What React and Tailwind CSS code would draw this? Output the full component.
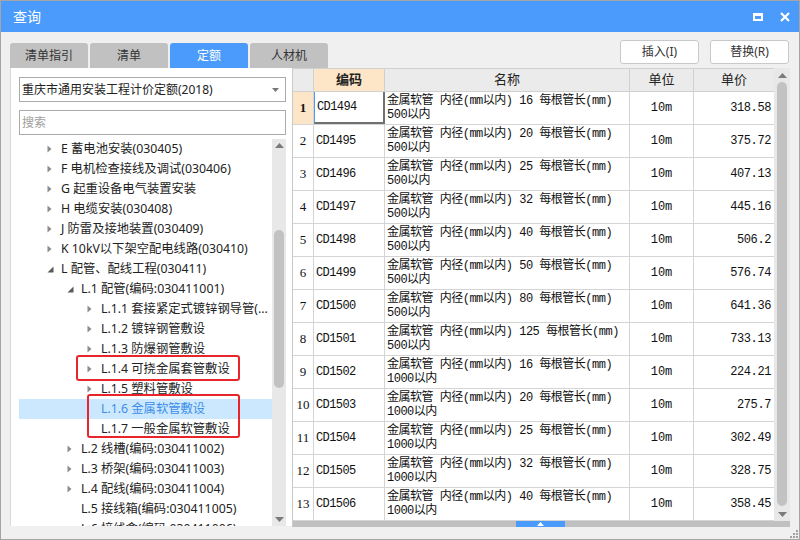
import React from "react";

const ui = { fontFamily: '"Noto Sans", "Noto Sans CJK SC", sans-serif' };
const mono = { fontFamily: '"Liberation Mono", "Noto Sans CJK SC", monospace' };

const tabs = ["清单指引", "清单", "定额", "人材机"];

const tree = [
  { lv: 1, a: "c", t: "E 蓄电池安装(030405)" },
  { lv: 1, a: "c", t: "F 电机检查接线及调试(030406)" },
  { lv: 1, a: "c", t: "G 起重设备电气装置安装" },
  { lv: 1, a: "c", t: "H 电缆安装(030408)" },
  { lv: 1, a: "c", t: "J 防雷及接地装置(030409)" },
  { lv: 1, a: "c", t: "K 10kV以下架空配电线路(030410)" },
  { lv: 1, a: "e", t: "L 配管、配线工程(030411)" },
  { lv: 2, a: "e", t: "L.1 配管(编码:030411001)" },
  { lv: 3, a: "c", t: "L.1.1 套接紧定式镀锌钢导管(..." },
  { lv: 3, a: "c", t: "L.1.2 镀锌钢管敷设" },
  { lv: 3, a: "c", t: "L.1.3 防爆钢管敷设" },
  { lv: 3, a: "c", t: "L.1.4 可挠金属套管敷设" },
  { lv: 3, a: "c", t: "L.1.5 塑料管敷设" },
  { lv: 3, a: null, t: "L.1.6 金属软管敷设", sel: true },
  { lv: 3, a: null, t: "L.1.7 一般金属软管敷设" },
  { lv: 2, a: "c", t: "L.2 线槽(编码:030411002)" },
  { lv: 2, a: "c", t: "L.3 桥架(编码:030411003)" },
  { lv: 2, a: "c", t: "L.4 配线(编码:030411004)" },
  { lv: 2, a: null, t: "L.5 接线箱(编码:030411005)" },
  { lv: 2, a: null, t: "L.6 接线盒(编码:030411006)" },
];

const rows = [
  ["CD1494", "16", "500以内", "318.58"],
  ["CD1495", "20", "500以内", "375.72"],
  ["CD1496", "25", "500以内", "407.13"],
  ["CD1497", "32", "500以内", "445.16"],
  ["CD1498", "40", "500以内", "506.2"],
  ["CD1499", "50", "500以内", "576.74"],
  ["CD1500", "80", "500以内", "641.36"],
  ["CD1501", "125", "500以内", "733.13"],
  ["CD1502", "16", "1000以内", "224.21"],
  ["CD1503", "20", "1000以内", "275.7"],
  ["CD1504", "25", "1000以内", "302.49"],
  ["CD1505", "32", "1000以内", "328.75"],
  ["CD1506", "40", "1000以内", "358.45"],
];

const pad = { 1: "pl-[28px]", 2: "pl-[48px]", 3: "pl-[68px]" };

function Arrow({ type }) {
  if (type === "c")
    return (
      <svg width="6" height="8" viewBox="0 0 6 8">
        <polygon points="0.5,0.5 4.5,4 0.5,7.5" fill="#8c8c8c" />
      </svg>
    );
  if (type === "e")
    return (
      <svg width="7" height="7" viewBox="0 0 7 7">
        <polygon points="6.5,0.5 6.5,6.5 0.5,6.5" fill="#5a5a5a" />
      </svg>
    );
  return null;
}

function UpTri({ color = "#7a7a7a" }) {
  return (
    <svg width="9" height="5" viewBox="0 0 9 5">
      <polygon points="0,5 4.5,0 9,5" fill={color} />
    </svg>
  );
}

function DownTri({ color = "#7a7a7a" }) {
  return (
    <svg width="9" height="5" viewBox="0 0 9 5">
      <polygon points="0,0 4.5,5 9,0" fill={color} />
    </svg>
  );
}

function Tree() {
  return (
    <div className="relative flex h-[387px] overflow-hidden">
      <div className="w-[253px] ml-[8px] overflow-hidden">
        {tree.map((n, i) => (
          <div
            key={i}
            className={`flex items-center h-[20px] ${pad[n.lv]} ${
              n.sel ? "bg-[#cce8ff] text-[#3d8ee8]" : "text-[#222]"
            }`}
          >
            <span className="w-[14px] flex items-center">
              <Arrow type={n.a} />
            </span>
            <span className="whitespace-nowrap text-[12.3px] leading-[20px]">{n.t}</span>
          </div>
        ))}
      </div>
      <div className="w-[14px] bg-[#e8e8e8] flex flex-col items-center">
        <div className="h-[13px] flex items-center">
          <UpTri />
        </div>
        <div className="h-[78px]" />
        <div className="w-[10px] h-[158px] rounded-full bg-[#c2c2c2]" />
        <div className="flex-1" />
        <div className="h-[14px] flex items-center">
          <DownTri />
        </div>
      </div>
      <div className="absolute left-[65px] top-[216px] w-[164px] h-[26px] border-2 border-[#e8262a] rounded-[3px]" />
      <div className="absolute left-[76px] top-[255px] w-[153px] h-[44px] border-2 border-[#e8262a] rounded-[3px]" />
    </div>
  );
}

function Grid() {
  return (
    <div className="w-[498px] flex flex-col border-l border-[#c9c9c9]">
      <div className="flex">
        <div className="w-[481px] border-t border-[#d0d0d0]">
          <div className="flex h-[23px] bg-[#ebebeb] text-[13px] text-[#222] border-b border-[#d0d0d0]" style={ui}>
            <div className="w-[21px] border-r border-[#d0d0d0]" />
            <div className="w-[71px] border-r border-[#d0d0d0] bg-[#fde6c8] font-bold flex items-center justify-center">
              编码
            </div>
            <div className="w-[245px] border-r border-[#d0d0d0] flex items-center justify-center">名称</div>
            <div className="w-[64px] border-r border-[#d0d0d0] flex items-center justify-center">单位</div>
            <div className="w-[80px] flex items-center justify-center">单价</div>
          </div>
          {rows.map((r, i) => (
            <div key={i} className="flex h-[33px] border-b border-[#d4d4d4] bg-white text-[12px] text-[#111]">
              <div
                className={`w-[21px] border-r border-[#d4d4d4] flex items-center justify-center text-[13px] ${
                  i === 0 ? "bg-[#fde6c8] font-bold" : ""
                }`}
                style={{ fontFamily: '"Liberation Serif", serif' }}
              >
                {i + 1}
              </div>
              <div
                className={`w-[71px] border-r border-[#d4d4d4] flex items-center pl-[2px] tracking-[-0.6px] ${
                  i === 0 ? "border-l border-l-[#4a9bfb] border-b-2 border-b-[#707070] border-r-2 border-r-[#707070]" : ""
                }`}
                style={mono}
              >
                {r[0]}
              </div>
              <div className="w-[245px] border-r border-[#d4d4d4] flex flex-col justify-center pl-[2px] leading-[14px] tracking-[-0.5px]" style={mono}>
                <div className="whitespace-nowrap">金属软管 内径(mm以内) {r[1]} 每根管长(mm)</div>
                <div className="whitespace-nowrap">{r[2]}</div>
              </div>
              <div className="w-[64px] border-r border-[#d4d4d4] flex items-center justify-center" style={mono}>
                10m
              </div>
              <div className="w-[80px] flex items-center justify-end pr-[3px] tracking-[-0.4px]" style={mono}>
                {r[3]}
              </div>
            </div>
          ))}
        </div>
        <div className="w-[16px] bg-[#e8e8e8] flex flex-col items-center">
          <div className="h-[14px] flex items-center">
            <UpTri />
          </div>
          <div className="w-[10px] h-[424px] rounded-full bg-[#c2c2c2]" />
          <div className="flex-1" />
          <div className="h-[14px] flex items-center">
            <DownTri />
          </div>
        </div>
      </div>
      <div className="h-[6px] bg-[#c0c0c0] flex w-[497px]">
        <div className="w-[223px]" />
        <div className="w-[49px] bg-[#4a9bfb] flex items-start justify-center pt-[1px]">
          <svg width="7" height="4" viewBox="0 0 7 4">
            <polygon points="0,4 3.5,0 7,4" fill="#fff" />
          </svg>
        </div>
      </div>
    </div>
  );
}

export default function App() {
  return (
    <div className="w-[800px] h-[540px] border border-[#a5a5a5] bg-[#f0f0f0] flex flex-col" style={ui}>
      <div className="h-[31px] bg-[#4a9bfb] flex items-center justify-between pl-[12px] pr-[9px]">
        <span className="text-white text-[14px]">查询</span>
        <div className="flex items-center gap-[17px]">
          <div className="w-[10px] h-[8px] border-2 border-t-[3px] border-white" />
          <svg width="10" height="10" viewBox="0 0 10 10">
            <path d="M1 1 L9 9 M9 1 L1 9" stroke="#fff" strokeWidth="2.2" />
          </svg>
        </div>
      </div>

      <div className="pt-[8px] pl-[9px] pr-[9px]">
        <div className="flex justify-between h-[28px]">
          <div className="flex items-end gap-[2px]">
            {tabs.map((t, i) => (
              <div
                key={t}
                className={`w-[78px] h-[25px] rounded-t-[3px] flex items-center justify-center text-[12px] ${
                  i === 2 ? "bg-[#4a9bfb] text-white" : "bg-[#c1c1c1] text-[#333]"
                }`}
              >
                {t}
              </div>
            ))}
          </div>
          <div className="flex gap-[11px] pr-[1px]">
            {["插入(I)", "替换(R)"].map((b) => (
              <div
                key={b}
                className="w-[79px] h-[24px] bg-white border border-[#c9c9c9] rounded-[3px] flex items-center justify-center text-[12px] text-[#333]"
              >
                {b}
              </div>
            ))}
          </div>
        </div>

        <div className="flex">
          <div className="w-[283px] h-[458px] bg-white border-l border-[#d9d9d9] flex flex-col">
            <div className="mt-[9px] ml-[8px] w-[267px] h-[25px] border border-[#ababab] flex items-center justify-between pl-[2px] pr-[6px]">
              <span className="text-[12px] text-[#222]">重庆市通用安装工程计价定额(2018)</span>
              <svg width="7" height="4" viewBox="0 0 7 4">
                <polygon points="0,0 3.5,4 7,0" fill="#777" />
              </svg>
            </div>
            <div className="mt-[8px] ml-[8px] w-[267px] h-[25px] border border-[#ababab] flex items-center pl-[2px]">
              <span className="text-[12px] text-[#a0a0a0]">搜索</span>
            </div>
            <div className="mt-[4px]">
              <Tree />
            </div>
          </div>
          <Grid />
        </div>
      </div>

      <div className="flex-1 flex justify-end items-end pr-[1px] pb-[1px]">
        <svg width="8" height="8" viewBox="0 0 8 8">
          <rect x="6" y="0" width="2" height="2" fill="#a0a0a0" />
          <rect x="3" y="3" width="2" height="2" fill="#a0a0a0" />
          <rect x="6" y="3" width="2" height="2" fill="#a0a0a0" />
          <rect x="0" y="6" width="2" height="2" fill="#a0a0a0" />
          <rect x="3" y="6" width="2" height="2" fill="#a0a0a0" />
          <rect x="6" y="6" width="2" height="2" fill="#a0a0a0" />
        </svg>
      </div>
    </div>
  );
}
